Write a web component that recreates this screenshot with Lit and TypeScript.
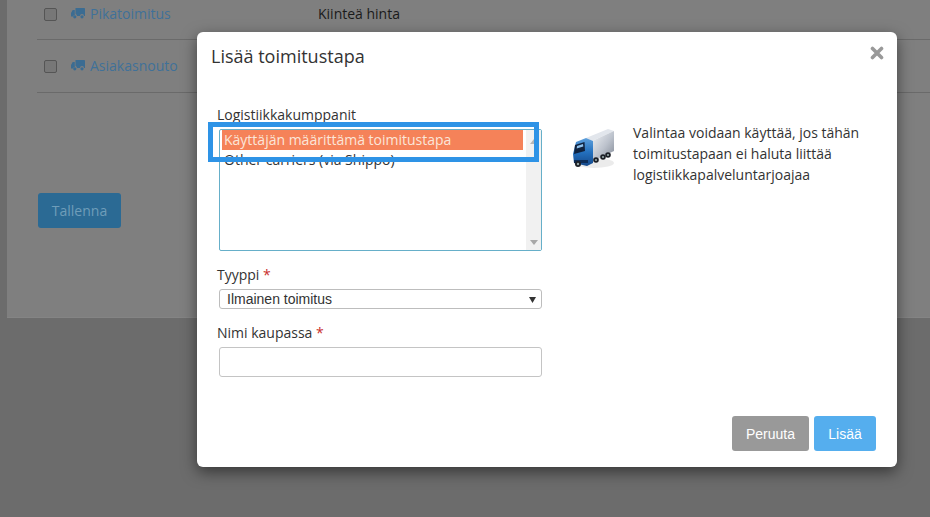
import { LitElement, html, css, svg } from "lit";
import { customElement } from "lit/decorators.js";

const miniTruck = svg`<svg class="mini" width="14" height="12" viewBox="0 0 14 12"><path fill="#3b6c92" d="M4.500 1h8.700a.8.8 0 0 1 .8.8V9h-1a2 2 0 0 0-4 0H6a2 2 0 0 0-1.500-1.900zM3.800 3v4.900A2 2 0 0 0 2 9.600H.6A.6.6 0 0 1 0 9V6l1.700-3z"/><circle cx="3.800" cy="9.800" r="1.600" fill="#3b6c92"/><circle cx="11" cy="9.800" r="1.600" fill="#3b6c92"/></svg>`;

const bigTruck = svg`<svg width="44" height="42" viewBox="0 0 44 42">
  <defs>
    <linearGradient id="box" x1="0" y1="0" x2="1" y2="1"><stop offset="0" stop-color="#f2f4f7"/><stop offset=".55" stop-color="#bcc2cc"/><stop offset="1" stop-color="#808794"/></linearGradient>
    <linearGradient id="cab" x1="0" y1="0" x2="0" y2="1"><stop offset="0" stop-color="#5ea0dc"/><stop offset=".5" stop-color="#2471bf"/><stop offset="1" stop-color="#14488a"/></linearGradient>
  </defs>
  <ellipse cx="22" cy="35" rx="20" ry="5" fill="#000" opacity=".08"/>
  <path fill="#e2e6ec" d="M14 10 36 1l6 2-22 10z"/>
  <path fill="url(#box)" d="M20 13 42 3v20L21 33z"/>
  <path fill="url(#cab)" d="M4 14 14 10l7 3v22l-6 3-13-3-1-9z"/>
  <path fill="#10233f" d="M3 17l9.500-3 .5 9-11 3z"/>
  <path fill="#8fc3ef" d="M5 18l6-2 .3 2.500-6.600 2z"/>
  <rect x="2" y="32" width="14" height="3" fill="#0c2c57"/>
  <circle cx="6" cy="36" r="3" fill="#1c1f26"/><circle cx="6" cy="36" r="1.200" fill="#9aa"/>
  <circle cx="24" cy="32" r="2.800" fill="#1c1f26"/><circle cx="24" cy="32" r="1.100" fill="#9aa"/>
  <circle cx="31" cy="29" r="2.800" fill="#1c1f26"/><circle cx="31" cy="29" r="1.100" fill="#9aa"/>
  <circle cx="36" cy="27" r="2.800" fill="#1c1f26"/><circle cx="36" cy="27" r="1.100" fill="#9aa"/>
</svg>`;

@customElement("app-root")
export class AppRoot extends LitElement {
  static styles = css`
    :host {
      display: block;
      position: relative;
      width: 930px;
      height: 517px;
      overflow: hidden;
      background: #6c6c6c;
      font-family: "Open Sans", sans-serif;
      font-size: 14px;
    }
    .page {
      margin-left: 7px;
      height: 318px;
      box-sizing: border-box;
      background: #7f7f7f;
      padding-left: 30px;
      border-bottom: 1px solid #848484;
    }
    .row {
      height: 53px;
      box-sizing: border-box;
      border-bottom: 1px solid #6a6a6a;
      display: flex;
      align-items: center;
      padding-bottom: 2px;
    }
    .row.first {
      height: 40px;
      padding-bottom: 13px;
    }
    .cb {
      width: 11px;
      height: 11px;
      margin: 2px 0 0 7px;
      border: 1px solid #555;
      border-radius: 2px;
      background: #777;
      flex: none;
    }
    .mini {
      margin-left: 14px;
      flex: none;
    }
    .link {
      margin-left: 5px;
      width: 228px;
      color: #3f7199;
    }
    .price {
      color: #1a1a1a;
    }
    .save {
      margin: 100px 0 0 1px;
      width: 83px;
      height: 35px;
      border: 0;
      border-radius: 3px;
      background: #2b6a94;
      color: #6f9db9;
      font: 14px "Open Sans", sans-serif;
      padding: 0;
    }
    .modal {
      position: absolute;
      left: 197px;
      top: 32px;
      width: 700px;
      height: 435px;
      box-sizing: border-box;
      background: #fff;
      border-radius: 6px;
      box-shadow: 0 5px 15px rgba(0, 0, 0, 0.5);
      padding: 12px 21px 16px 14px;
      display: flex;
      flex-direction: column;
    }
    .head {
      display: flex;
      justify-content: space-between;
      align-items: center;
      height: 24px;
    }
    h2 {
      margin: 0;
      font-size: 18px;
      font-weight: 400;
      color: #333;
      line-height: 24px;
    }
    .close {
      margin-right: -8px;
      margin-top: -7px;
    }
    .body {
      display: flex;
      flex: 1;
      padding-top: 37px;
    }
    .form {
      width: 331px;
      flex: none;
      padding-left: 8px;
      box-sizing: border-box;
    }
    label {
      display: block;
      color: #333;
      line-height: 20px;
      margin-left: -2px;
    }
    .req {
      color: #c9302c;
    }
    .list {
      position: relative;
      width: 323px;
      height: 122px;
      margin-top: 4px;
      box-sizing: border-box;
      border: 1px solid #66afc9;
      border-radius: 2px;
      display: flex;
      background: #fff;
    }
    .opts {
      flex: 1;
      padding: 0 3px 0 2px;
      min-width: 0;
    }
    .opt {
      height: 20px;
      line-height: 20px;
      padding-left: 2px;
      color: #333;
      white-space: nowrap;
    }
    .opt.sel {
      background: #f58259;
      color: #fbe6da;
    }
    .bar {
      width: 15px;
      flex: none;
      background: #f1f1f1;
      display: flex;
      flex-direction: column;
      justify-content: space-between;
      align-items: center;
      padding: 9px 0 5px;
      box-sizing: border-box;
    }
    .mark {
      position: absolute;
      left: -12px;
      top: -8px;
      width: 331px;
      height: 40px;
      box-sizing: border-box;
      border: 5px solid #2e93e6;
      pointer-events: none;
    }
    .type {
      margin-top: 14px;
    }
    .select {
      width: 323px;
      height: 20px;
      margin-top: 4px;
      box-sizing: border-box;
      border: 1px solid #bdbdbd;
      border-radius: 3px;
      display: flex;
      align-items: center;
      justify-content: space-between;
      padding: 0 5px 0 7px;
      font: 14px "Liberation Sans", sans-serif;
      color: #333;
    }
    .name {
      margin-top: 14px;
    }
    .input {
      width: 323px;
      height: 30px;
      margin-top: 4px;
      box-sizing: border-box;
      border: 1px solid #c4c4c4;
      border-radius: 3px;
    }
    .info {
      display: flex;
      padding: 17px 0 0 30px;
    }
    .info svg {
      flex: none;
      margin-top: 6px;
    }
    .info p {
      margin: 0 0 0 17px;
      width: 240px;
      font-size: 14px;
      line-height: 21px;
      color: #333;
    }
    .foot {
      display: flex;
      justify-content: flex-end;
      gap: 5px;
    }
    .btn {
      height: 35px;
      border: 0;
      border-radius: 3px;
      color: #fff;
      font: 14px "Liberation Sans", sans-serif;
      padding: 0;
    }
    .cancel {
      width: 77px;
      background: #999;
    }
    .add {
      width: 62px;
      background: #55aeee;
    }
  `;

  render() {
    return html`
      <div class="page">
        <div class="row first">
          <span class="cb"></span>${miniTruck}
          <span class="link">Pikatoimitus</span>
          <span class="price">Kiinteä hinta</span>
        </div>
        <div class="row">
          <span class="cb"></span>${miniTruck}
          <span class="link">Asiakasnouto</span>
        </div>
        <button class="save">Tallenna</button>
      </div>
      <div class="modal">
        <div class="head">
          <h2>Lisää toimitustapa</h2>
          <svg class="close" width="14" height="14" viewBox="0 0 14 14">
            <path d="M2.500 2.500l9 9M11.500 2.500l-9 9" stroke="#999" stroke-width="3.600" stroke-linecap="round" fill="none" />
          </svg>
        </div>
        <div class="body">
          <div class="form">
            <label>Logistiikkakumppanit</label>
            <div class="list">
              <div class="opts">
                <div class="opt sel">Käyttäjän määrittämä toimitustapa</div>
                <div class="opt">Other carriers (via Shippo)</div>
              </div>
              <div class="bar">
                <svg width="8" height="5" viewBox="0 0 8 5"><path d="M4 0l4 5H0z" fill="#b5b5b5" /></svg>
                <svg width="8" height="5" viewBox="0 0 8 5"><path d="M0 0h8L4 5z" fill="#a8a8a8" /></svg>
              </div>
              <div class="mark"></div>
            </div>
            <label class="type">Tyyppi <span class="req">*</span></label>
            <div class="select">
              <span>Ilmainen toimitus</span>
              <svg width="7" height="7" viewBox="0 0 7 7"><path d="M0 1h7L3.500 7z" fill="#333" /></svg>
            </div>
            <label class="name">Nimi kaupassa <span class="req">*</span></label>
            <div class="input"></div>
          </div>
          <div class="info">
            ${bigTruck}
            <p>Valintaa voidaan käyttää, jos tähän toimitustapaan ei haluta liittää logistiikkapalveluntarjoajaa</p>
          </div>
        </div>
        <div class="foot">
          <button class="btn cancel">Peruuta</button>
          <button class="btn add">Lisää</button>
        </div>
      </div>
    `;
  }
}
